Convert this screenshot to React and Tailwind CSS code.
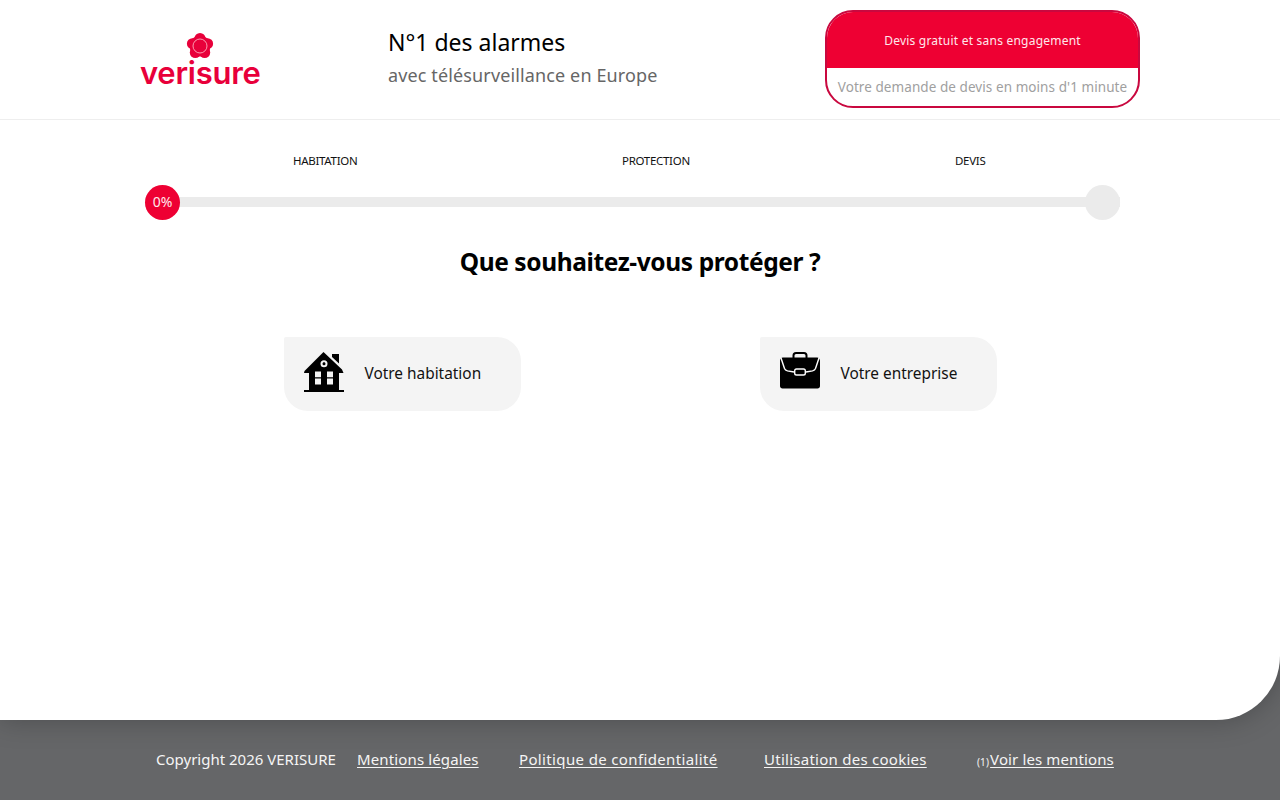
export default function App() {
  const font = { fontFamily: '"Noto Sans", "Liberation Sans", sans-serif' };
  return (
    <div style={font} className="w-full h-[800px] overflow-hidden bg-[#656668] flex flex-col">
      <main className="relative z-10 h-[720px] shrink-0 bg-white rounded-br-[64px] shadow-[0_0_28px_rgba(0,0,0,0.25)] flex flex-col">
        <header className="h-[120px] shrink-0 border-b border-[#eeeeee]">
          <div className="w-[1000px] mx-auto h-full flex items-start">
            <div className="w-[248px] shrink-0 pt-[31px] flex flex-col items-start">
              <svg viewBox="0 0 30 30" className="w-[30px] h-[30px] ml-[45px]">
                <g fill="#e8003a">
                  <circle cx="15" cy="7.500" r="5.500" />
                  <circle cx="22.600" cy="12.700" r="5.500" />
                  <circle cx="19.700" cy="21.500" r="5.500" />
                  <circle cx="10.300" cy="21.500" r="5.500" />
                  <circle cx="7.400" cy="12.700" r="5.500" />
                  <circle cx="15" cy="15" r="10.500" />
                </g>
                <circle cx="15" cy="15" r="7" fill="none" stroke="#ffc2cd" strokeWidth="0.8" />
              </svg>
              <span style={{ fontFamily: '"Inter", sans-serif' }} className="text-[31px] leading-[24px] font-semibold text-[#e8003a] tracking-[-0.25px]">verisure</span>
            </div>
            <div className="flex-1 pt-[25px]">
              <p className="text-[23px] leading-[34px] text-black">N°1 des alarmes</p>
              <p className="text-[18px] leading-[32px] text-[#666666] tracking-[0.13px]">avec télésurveillance en Europe</p>
            </div>
            <div className="w-[315px] h-[98px] mt-[10px] rounded-[28px] border-2 border-[#c9083f] overflow-hidden flex flex-col">
              <div className="h-[56px] shrink-0 bg-[#ee0033] flex items-center justify-center text-[12px] text-[#ffe8ec] tracking-[0.22px] pt-[2px]">Devis gratuit et sans engagement</div>
              <div className="flex-1 flex items-center justify-center text-[13.5px] text-[#a0a0a0] tracking-[0.07px] pt-[1px]">Votre demande de devis en moins d'1 minute</div>
            </div>
          </div>
        </header>

        <section className="w-[1000px] mx-auto pt-[32px]">
          <div className="relative h-[18px] text-[11.5px] leading-[18px] text-[#111111] tracking-[-0.3px]">
            <span className="absolute left-[153px]">HABITATION</span>
            <span className="absolute left-[482px]">PROTECTION</span>
            <span className="absolute left-[815px]">DEVIS</span>
          </div>
          <div className="relative mt-[15px] ml-[5px] w-[975px] h-[35px] flex items-center">
            <div className="w-full h-[10px] mb-[1px] bg-[#ebebeb]"></div>
            <div className="absolute left-0 top-0 w-[35px] h-[35px] rounded-full bg-[#ee0033] text-[#ffe8ec] text-[14px] flex items-center justify-center pb-[3px]">0%</div>
            <div className="absolute right-0 top-0 w-[35px] h-[35px] rounded-full bg-[#ebebeb]"></div>
          </div>
          <h1 className="mt-[24px] text-center text-[24.5px] leading-[36px] font-bold text-black tracking-[-0.4px]">Que souhaitez-vous protéger ?</h1>
          <div className="w-[952px] mx-auto mt-[57px] grid grid-cols-2">
            <div className="flex justify-center">
              <div className="w-[237px] h-[74px] bg-[#f4f4f4] rounded-[24px] rounded-tl-[2px] flex items-center pl-[20px] gap-[20px] text-[15.4px] text-[#111111]">
                <svg viewBox="0 0 40 40" className="w-[40px] h-[40px] shrink-0 mb-[4px]">
                  <path fill="#000" d="M0 38h40v2H0zM28 2h7v9.500l-7-6.500z" />
                  <path fill="#000" fillRule="evenodd" d="M19.500 0 L38 17.500 L39.500 21 L35 21 L35 38 L5 38 L5 21 L0 21 L0.500 19 Z M20 8.200a3.500 3.500 0 1 0 0 7a3.500 3.500 0 0 0 0-7z M20 10.200a1.500 1.500 0 1 1 0 3a1.500 1.500 0 0 1 0-3z M11 19.500h6v13h-6z M23 19.500h6v13h-6z" />
                  <path fill="#000" d="M18.900 11.700a1.100 1.100 0 1 0 2.200 0a1.100 1.100 0 0 0-2.200 0zM11 25.200h6v1.300h-6zM23 25.200h6v1.300h-6z" />
                </svg>
                <span className="ml-[1px]">Votre habitation</span>
              </div>
            </div>
            <div className="flex justify-center">
              <div className="w-[237px] h-[74px] bg-[#f4f4f4] rounded-[24px] rounded-tl-[2px] flex items-center pl-[20px] gap-[20px] text-[15.4px] text-[#111111]">
                <svg viewBox="0 0 40 40" className="w-[40px] h-[40px] shrink-0 mb-[4px]">
                  <path fill="none" stroke="#000" strokeWidth="2" d="M13.500 6V3.500C13.500 2 14.500 1 16 1h8c1.500 0 2.500 1 2.500 2.500V6" />
                  <path fill="#000" d="M0 9c0-2 1.200-3.500 3-3.500h34c1.800 0 3 1.500 3 3.500v25c0 1.500-1 2.500-2.500 2.500h-35C1 36.500 0 35.500 0 34z" />
                  <path fill="none" stroke="#fff" strokeWidth="1.400" d="M1 6l3.500 10.500c.5 1.300 1.500 2 3 2.400L14 20M26 20l6.500-1.100c1.500-.4 2.500-1.100 3-2.400L39 6" />
                  <rect x="14.700" y="17" width="10.600" height="6" rx="1.800" fill="#000" stroke="#fff" strokeWidth="1.400" />
                </svg>
                <span className="ml-[1px]">Votre entreprise</span>
              </div>
            </div>
          </div>
        </section>
      </main>

      <footer className="h-[80px] shrink-0 text-[#f5f5f5] text-[15px] flex items-center pl-[156px] pb-[1px]">
        <span className="w-[201px] shrink-0">Copyright 2026 VERISURE</span>
        <a className="w-[162px] shrink-0 tracking-[0.13px]"><span className="underline underline-offset-2">Mentions légales</span></a>
        <a className="w-[245px] shrink-0 tracking-[0.36px]"><span className="underline underline-offset-2">Politique de confidentialité</span></a>
        <a className="w-[213px] shrink-0 tracking-[0.26px]"><span className="underline underline-offset-2">Utilisation des cookies</span></a>
        <a className="shrink-0 tracking-[0.12px]"><span className="text-[10px] align-[-1px] mr-[1px]">(1)</span><span className="underline underline-offset-2">Voir les mentions</span></a>
      </footer>
    </div>
  );
}
